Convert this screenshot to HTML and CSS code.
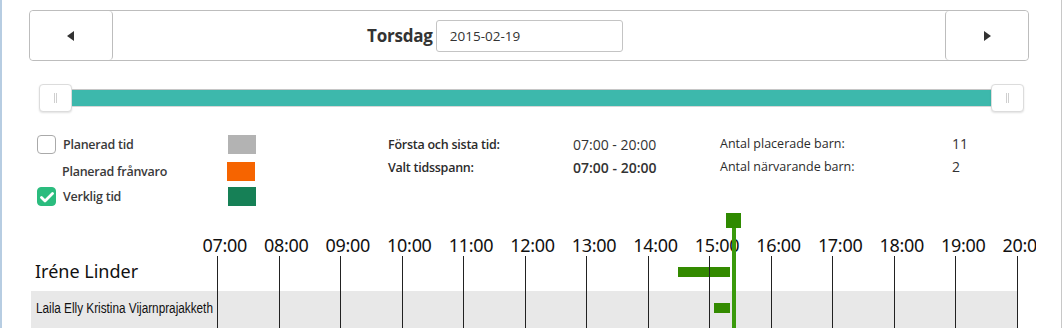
FILE: index.html
```html
<!DOCTYPE html>
<html lang="sv">
<head>
<meta charset="utf-8">
<title>Närvaro</title>
<link rel="stylesheet" href="styles.css">
</head>
<body>
<div class="page">
  <div class="nav">
    <button class="nav-btn" type="button" aria-label="Föregående dag">
      <svg width="8" height="10" viewBox="0 0 8 10"><path d="M7 0 L7 10 L0 5 Z" fill="#333"/></svg>
    </button>
    <div class="nav-center">
      <span class="day">Torsdag</span>
      <input class="date" type="text" value="2015-02-19">
    </div>
    <button class="nav-btn" type="button" aria-label="Nästa dag">
      <svg width="8" height="10" viewBox="0 0 8 10"><path d="M1 0 L1 10 L8 5 Z" fill="#333"/></svg>
    </button>
  </div>

  <div class="slider">
    <div class="handle"><span class="grip"></span></div>
    <div class="track"></div>
    <div class="handle"><span class="grip"></span></div>
  </div>

  <div class="info">
    <div class="legend">
      <div class="lg-row r1">
        <span class="cb"></span>
        <span class="lg-label">Planerad tid</span>
        <span class="swatch grey"></span>
      </div>
      <div class="lg-row r2">
        <span class="cb-none"></span>
        <span class="lg-label">Planerad frånvaro</span>
        <span class="swatch orange"></span>
      </div>
      <div class="lg-row r3">
        <span class="cb checked">
          <svg width="14" height="12" viewBox="0 0 14 12"><path d="M1.5 6.5 L5 10 L12.5 2.5" fill="none" stroke="#fff" stroke-width="2.8" stroke-linecap="round" stroke-linejoin="round"/></svg>
        </span>
        <span class="lg-label">Verklig tid</span>
        <span class="swatch green"></span>
      </div>
    </div>
    <div class="stats mid">
      <div class="st-row"><span class="st-label">Första och sista tid:</span><span class="st-val">07:00 - 20:00</span></div>
      <div class="st-row"><span class="st-label">Valt tidsspann:</span><span class="st-val strong">07:00 - 20:00</span></div>
    </div>
    <div class="stats right">
      <div class="st-row"><span class="st-label">Antal placerade barn:</span><span class="st-val">11</span></div>
      <div class="st-row"><span class="st-label">Antal närvarande barn:</span><span class="st-val">2</span></div>
    </div>
  </div>

  <div class="timeline">
    <div class="chart">
      <span class="hour" style="left:0%">07:00</span>
      <span class="hour" style="left:7.6923%">08:00</span>
      <span class="hour" style="left:15.3846%">09:00</span>
      <span class="hour" style="left:23.0769%">10:00</span>
      <span class="hour" style="left:30.7692%">11:00</span>
      <span class="hour" style="left:38.4615%">12:00</span>
      <span class="hour" style="left:46.1538%">13:00</span>
      <span class="hour" style="left:53.8462%">14:00</span>
      <span class="hour" style="left:61.5385%">15:00</span>
      <span class="hour" style="left:69.2308%">16:00</span>
      <span class="hour" style="left:76.9231%">17:00</span>
      <span class="hour" style="left:84.6154%">18:00</span>
      <span class="hour" style="left:92.3077%">19:00</span>
      <span class="hour" style="left:100%">20:00</span>
    </div>
    <div class="rows">
      <div class="row">
        <div class="name big">Iréne Linder</div>
        <div class="lane"><span class="bar" style="left:57.6%;width:6.5%"></span></div>
      </div>
      <div class="row alt">
        <div class="name small"><span class="narrow">Laila Elly Kristina Vijarnprajakketh</span></div>
        <div class="lane"><span class="bar b2" style="left:62.1%;width:2%"></span></div>
      </div>
      <div class="gridlines">
        <span class="gl" style="left:0%"></span>
        <span class="gl" style="left:7.6923%"></span>
        <span class="gl" style="left:15.3846%"></span>
        <span class="gl" style="left:23.0769%"></span>
        <span class="gl" style="left:30.7692%"></span>
        <span class="gl" style="left:38.4615%"></span>
        <span class="gl" style="left:46.1538%"></span>
        <span class="gl" style="left:53.8462%"></span>
        <span class="gl" style="left:61.5385%"></span>
        <span class="gl" style="left:69.2308%"></span>
        <span class="gl" style="left:76.9231%"></span>
        <span class="gl" style="left:84.6154%"></span>
        <span class="gl" style="left:92.3077%"></span>
        <span class="gl" style="left:100%"></span>
      </div>
    </div>
    <div class="plot">
      <div class="now" style="left:64.5%"><span class="now-head"></span><span class="now-line"></span></div>
    </div>
  </div>
</div>
</body>
</html>
```

FILE: styles.css
```css
* { box-sizing: border-box; }
html, body { margin: 0; padding: 0; background: #fff; }
body { font-family: "Open Sans", "Liberation Sans", sans-serif; color: #333; }

.page {
  width: 1062px;
  height: 328px;
  overflow: hidden;
  border-left: 2px solid #b7cde2;
  border-right: 1px solid #c8c8c8;
  padding: 10px 32px 0 27px;
}

/* nav */
.nav {
  display: flex;
  height: 51px;
  border: 1px solid #bdbdbd;
  border-radius: 4px;
}
.nav-btn {
  width: 83px;
  flex: none;
  background: #fff;
  border: 0;
  padding: 0;
  display: flex;
  align-items: center;
  justify-content: center;
  border-radius: 4px;
}
.nav-btn:first-child { border-right: 1px solid #bdbdbd; }
.nav-btn:last-child { border-left: 1px solid #bdbdbd; }
.nav-btn svg { display: block; }
.nav-center {
  flex: 1;
  display: flex;
  align-items: center;
  padding-left: 254px;
  gap: 3px;
}
.day { font-size: 17px; font-weight: 700; color: #333; letter-spacing: -0.2px; }
.date {
  width: 187px;
  height: 32px;
  border: 1px solid #c4c4c4;
  border-radius: 3px;
  padding: 0 13px;
  font-family: "Open Sans", sans-serif;
  font-size: 13.5px;
  color: #333;
  outline: none;
}

/* slider */
.slider {
  display: flex;
  align-items: center;
  height: 28px;
  margin: 23px 5px 0 10px;
}
.handle {
  width: 33px;
  height: 28px;
  flex: none;
  background: #fff;
  border: 1px solid #dcdcdc;
  border-radius: 4px;
  box-shadow: 0 1px 2px rgba(0,0,0,0.12);
  display: flex;
  align-items: center;
  justify-content: center;
}
.grip {
  width: 3px;
  height: 10px;
  border-left: 1px solid #cfcfcf;
  border-right: 1px solid #cfcfcf;
}
.track {
  flex: 1;
  height: 18px;
  background: #3db8ac;
  border-top: 1px solid #c6c6c6;
  border-bottom: 1px solid #d6d6d6;
}

/* info */
.info {
  display: flex;
  margin-top: 23px;
  height: 72px;
}
.legend {
  width: 359px;
  padding-left: 8px;
  display: flex;
  flex-direction: column;
}
.lg-row {
  display: flex;
  align-items: center;
  height: 19px;
}
.lg-row.r2 { margin-top: 8px; }
.lg-row.r3 { margin-top: 6px; }
.cb, .cb-none {
  width: 19px;
  height: 19px;
  flex: none;
  margin-right: 7px;
}
.cb {
  border: 1px solid #aaa;
  border-radius: 4px;
  background: #fff;
  display: flex;
  align-items: center;
  justify-content: center;
}
.cb.checked { background: #2bbc7e; border-color: #2bbc7e; }
.cb-none { width: 18px; }
.lg-label {
  width: 165px;
  font-size: 12.5px;
  font-weight: 600;
  letter-spacing: -0.25px;
  color: #3a3a3a;
}
.swatch { width: 28px; height: 19px; flex: none; }
.grey { background: #b3b3b3; }
.orange { background: #f66400; }
.green { background: #168056; }

.stats { display: flex; flex-direction: column; }
.stats.mid { width: 332px; }
.st-row {
  display: flex;
  align-items: center;
  height: 19px;
  margin-bottom: 4px;
}
.st-label { font-size: 12.5px; color: #2b2b2b; }
.mid .st-label { width: 185px; font-weight: 600; letter-spacing: -0.25px; }
.right .st-label { width: 232px; font-weight: 400; }
.st-val { font-size: 14px; color: #333; }
.st-val.strong { font-weight: 600; }
.right .st-row:first-child { margin-top: -1px; }

/* timeline */
.timeline {
  position: relative;
  margin-left: 2px;
  width: 1005px;
  height: 115px;
  margin-top: 6px;
  overflow: hidden;
  font-family: "Noto Sans", "DejaVu Sans", sans-serif;
}
.chart {
  position: absolute;
  left: 186px;
  top: 20px;
  width: 800px;
  height: 24px;
}
.hour {
  position: absolute;
  top: 0;
  margin-left: -14.5px;
  font-size: 18px;
  line-height: 24px;
  color: #111;
  letter-spacing: -0.3px;
}
.rows {
  position: absolute;
  left: 0;
  top: 43px;
  width: 986px;
}
.row {
  display: flex;
  height: 35px;
}
.row.alt { background: #e8e8e8; height: 40px; }
.name {
  width: 186px;
  flex: none;
  display: flex;
  align-items: center;
  padding-left: 4px;
  color: #111;
  white-space: nowrap;
}
.name.big { font-size: 18px; padding-bottom: 5px; }
.name.small {
  font-family: "Liberation Sans", sans-serif;
  font-size: 14px;
  padding-left: 5px;
  padding-bottom: 6px;
}
.narrow {
  display: inline-block;
  transform: scaleX(0.84);
  transform-origin: left center;
}
.lane { flex: 1; position: relative; }
.bar {
  position: absolute;
  top: 11px;
  height: 10px;
  background: #338a00;
}
.bar.b2 { top: 12px; }
.gridlines {
  position: absolute;
  left: 186px;
  top: 0;
  width: 800px;
  height: 80px;
  pointer-events: none;
}
.gl {
  position: absolute;
  top: 0;
  bottom: 0;
  width: 1px;
  background: #222;
}
.plot {
  position: absolute;
  left: 186px;
  top: 0;
  width: 800px;
  height: 115px;
  pointer-events: none;
}
.now {
  position: absolute;
  top: 0;
  width: 15px;
  height: 115px;
  margin-left: -7px;
  display: flex;
  flex-direction: column;
  align-items: center;
}
.now-head { width: 15px; height: 15px; background: #2f8a00; flex: none; }
.now-line { width: 4px; flex: 1; background: #3a9a0c; }
```
